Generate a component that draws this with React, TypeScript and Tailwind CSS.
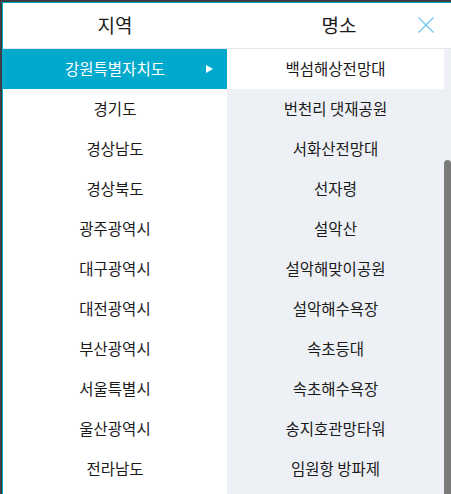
import React from 'react';

const regions = [
  '강원특별자치도',
  '경기도',
  '경상남도',
  '경상북도',
  '광주광역시',
  '대구광역시',
  '대전광역시',
  '부산광역시',
  '서울특별시',
  '울산광역시',
  '전라남도',
];

const spots = [
  '백섬해상전망대',
  '번천리 댓재공원',
  '서화산전망대',
  '선자령',
  '설악산',
  '설악해맞이공원',
  '설악해수욕장',
  '속초등대',
  '속초해수욕장',
  '송지호관망타워',
  '임원항 방파제',
];

const font = { fontFamily: '"Noto Sans CJK KR", "Noto Sans", sans-serif' };

export default function App() {
  const selectedRegion = 0;
  const selectedSpot = 0;

  return (
    <div className="h-[494px] w-[451px] overflow-hidden bg-[#3b3f43] pl-[2px] pt-[2px]" style={font}>
      <div className="flex h-full flex-col border-l border-t border-[#00a9ce] bg-white text-[#1a1a1a]">
        {/* column titles */}
        <div className="flex h-[46px] shrink-0 border-b border-[#e4e6ea]">
          <div className="flex w-[224px] items-center justify-center text-[19px]">지역</div>
          <div className="relative flex flex-1 items-center justify-center text-[19px]">
            명소
            <button className="absolute right-[17px] top-[14px] text-[#6fc4f0]">
              <svg width="16" height="16" viewBox="0 0 16 16" fill="none" stroke="currentColor" strokeWidth="1.2">
                <path d="M0.5 0.5 L15.5 15.5 M15.5 0.5 L0.5 15.5" />
              </svg>
            </button>
          </div>
        </div>

        <div className="flex flex-1 overflow-hidden">
          {/* regions */}
          <ul className="w-[224px] shrink-0">
            {regions.map((r, i) => (
              <li
                key={r}
                className={
                  i === selectedRegion
                    ? 'relative flex h-[40px] items-center justify-center bg-[#01a9cd] text-[15.5px] text-white'
                    : 'flex h-[40px] items-center justify-center text-[15.5px]'
                }
              >
                {r}
                {i === selectedRegion && (
                  <svg className="absolute left-[203px] top-[16px]" width="7" height="8" viewBox="0 0 7 8">
                    <path d="M0 0 L7 4 L0 8 Z" fill="white" />
                  </svg>
                )}
              </li>
            ))}
          </ul>

          {/* spots */}
          <div className="flex flex-1 bg-[#edf0f5]">
            <ul className="flex-1">
              {spots.map((s, i) => (
                <li
                  key={s}
                  className={
                    i === selectedSpot
                      ? 'flex h-[40px] items-center justify-center bg-white text-[15.5px]'
                      : 'flex h-[40px] items-center justify-center text-[15.5px]'
                  }
                >
                  {s}
                </li>
              ))}
            </ul>
            <div className="flex w-[7px] flex-col pt-[111px]">
              <div className="flex-1 rounded-t-[4px] bg-[#7a7a7a]" />
            </div>
          </div>
        </div>
      </div>
    </div>
  );
}
